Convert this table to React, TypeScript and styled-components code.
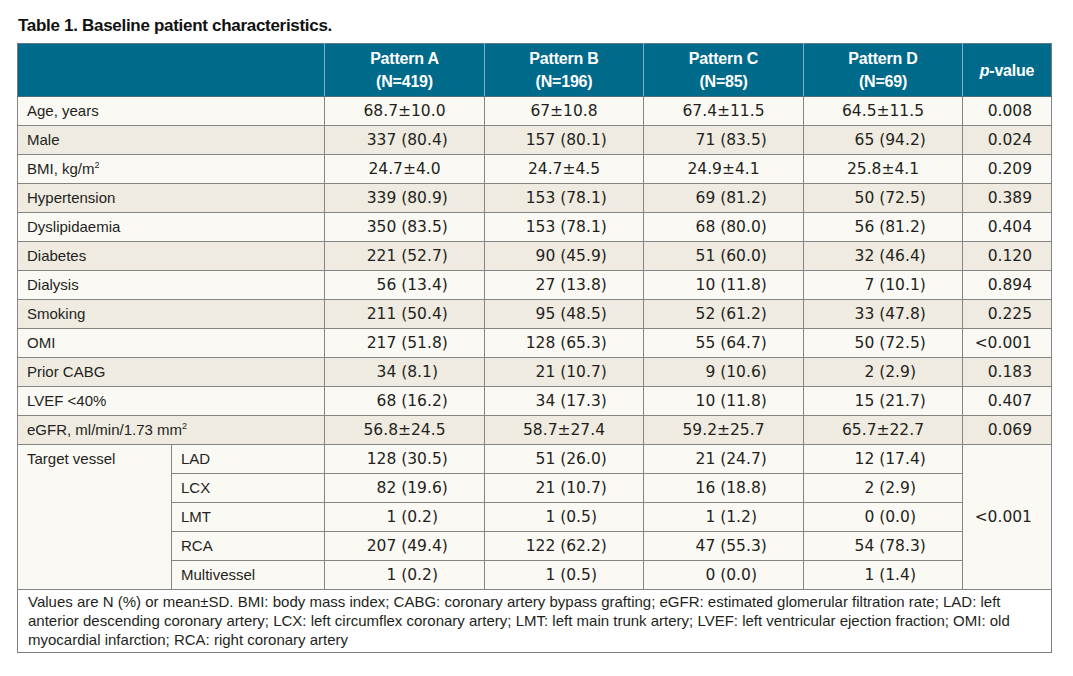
import React from 'react';
import styled, { createGlobalStyle } from 'styled-components';

const GlobalStyle = createGlobalStyle`
  html, body {
    margin: 0;
    padding: 0;
    background: #ffffff;
  }

  body {
    font-family: "Liberation Sans", Arial, sans-serif;
    color: #231f20;
  }
`;

type Row = {
  label: React.ReactNode;
  values: string[];
  p: string;
};

const rows: Row[] = [
  { label: 'Age, years', values: ['68.7±10.0', '67±10.8', '67.4±11.5', '64.5±11.5'], p: '0.008' },
  { label: 'Male', values: ['337 (80.4)', '157 (80.1)', '71 (83.5)', '65 (94.2)'], p: '0.024' },
  { label: <>BMI, kg/m<sup>2</sup></>, values: ['24.7±4.0', '24.7±4.5', '24.9±4.1', '25.8±4.1'], p: '0.209' },
  { label: 'Hypertension', values: ['339 (80.9)', '153 (78.1)', '69 (81.2)', '50 (72.5)'], p: '0.389' },
  { label: 'Dyslipidaemia', values: ['350 (83.5)', '153 (78.1)', '68 (80.0)', '56 (81.2)'], p: '0.404' },
  { label: 'Diabetes', values: ['221 (52.7)', '90 (45.9)', '51 (60.0)', '32 (46.4)'], p: '0.120' },
  { label: 'Dialysis', values: ['56 (13.4)', '27 (13.8)', '10 (11.8)', '7 (10.1)'], p: '0.894' },
  { label: 'Smoking', values: ['211 (50.4)', '95 (48.5)', '52 (61.2)', '33 (47.8)'], p: '0.225' },
  { label: 'OMI', values: ['217 (51.8)', '128 (65.3)', '55 (64.7)', '50 (72.5)'], p: '<0.001' },
  { label: 'Prior CABG', values: ['34 (8.1)', '21 (10.7)', '9 (10.6)', '2 (2.9)'], p: '0.183' },
  { label: 'LVEF <40%', values: ['68 (16.2)', '34 (17.3)', '10 (11.8)', '15 (21.7)'], p: '0.407' },
  {
    label: <>eGFR, ml/min/1.73 mm<sup>2</sup></>,
    values: ['56.8±24.5', '58.7±27.4', '59.2±25.7', '65.7±22.7'],
    p: '0.069'
  }
];

const vessels: [string, string[]][] = [
  ['LAD', ['128 (30.5)', '51 (26.0)', '21 (24.7)', '12 (17.4)']],
  ['LCX', ['82 (19.6)', '21 (10.7)', '16 (18.8)', '2 (2.9)']],
  ['LMT', ['1 (0.2)', '1 (0.5)', '1 (1.2)', '0 (0.0)']],
  ['RCA', ['207 (49.4)', '122 (62.2)', '47 (55.3)', '54 (78.3)']],
  ['Multivessel', ['1 (0.2)', '1 (0.5)', '0 (0.0)', '1 (1.4)']]
];

const groups = [
  ['Pattern A', '(N=419)'],
  ['Pattern B', '(N=196)'],
  ['Pattern C', '(N=85)'],
  ['Pattern D', '(N=69)']
];

// counts line up on the opening bracket, means are centred
function ValueCell({ value }: { value: string }) {
  const idx = value.indexOf(' (');
  if (idx < 0) return <MeanCell>{value}</MeanCell>;
  return (
    <CountCell>
      {value.slice(0, idx)} <Pct>{value.slice(idx + 1)}</Pct>
    </CountCell>
  );
}

export default function App() {
  return (
    <Page>
      <GlobalStyle />
      <Title>Table 1. Baseline patient characteristics.</Title>
      <Table>
        <colgroup>
          <col style={{ width: 154 }} />
          <col style={{ width: 153 }} />
          <col style={{ width: 160 }} />
          <col style={{ width: 159 }} />
          <col style={{ width: 160 }} />
          <col style={{ width: 159 }} />
          <col style={{ width: 89 }} />
        </colgroup>
        <thead>
          <tr>
            <HeadCell colSpan={2} />
            {groups.map(([name, n]) => (
              <HeadCell key={name}>
                {name}
                <br />
                {n}
              </HeadCell>
            ))}
            <HeadCell>
              <em>p</em>-value
            </HeadCell>
          </tr>
        </thead>
        <tbody>
          {rows.map((row, i) => (
            <BodyRow key={i} $shade={i % 2 === 1}>
              <LabelCell colSpan={2}>{row.label}</LabelCell>
              {row.values.map((v, j) => (
                <ValueCell key={j} value={v} />
              ))}
              <PCell>{row.p}</PCell>
            </BodyRow>
          ))}
          {vessels.map(([name, values], i) => (
            <BodyRow key={name} $shade={false}>
              {i === 0 && (
                <LabelCell rowSpan={5} $top>
                  Target vessel
                </LabelCell>
              )}
              <LabelCell>{name}</LabelCell>
              {values.map((v, j) => (
                <ValueCell key={j} value={v} />
              ))}
              {i === 0 && <PCell rowSpan={5}>&lt;0.001</PCell>}
            </BodyRow>
          ))}
          <tr>
            <FootCell colSpan={7}>
              Values are N (%) or mean±SD. BMI: body mass index; CABG: coronary artery bypass grafting; eGFR:
              estimated glomerular filtration rate; LAD: left
              <br />
              anterior descending coronary artery; LCX: left circumflex coronary artery; LMT: left main trunk
              artery; LVEF: left ventricular ejection fraction; OMI: old
              <br />
              myocardial infarction; RCA: right coronary artery
            </FootCell>
          </tr>
        </tbody>
      </Table>
    </Page>
  );
}

const Page = styled.div`
  padding: 15px 0 0 17px;
  width: 1073px;
  height: 676px;
  box-sizing: border-box;
`;

const Title = styled.h1`
  margin: 0 0 7px 1px;
  font-family: "Liberation Sans", Arial, sans-serif;
  font-size: 17px;
  line-height: 21px;
  letter-spacing: -0.3px;
  font-weight: 700;
  color: #111111;
`;

const Table = styled.table`
  width: 1035px;
  table-layout: fixed;
  border-collapse: collapse;
  border: 1px solid #7d7d7d;
`;

const HeadCell = styled.th`
  height: 52px;
  padding: 0;
  background: #006a8a;
  border-left: 1px solid #7fb2c4;
  border-right: 1px solid #7fb2c4;
  border-top: 1px solid #5f7a84;
  border-bottom: 1px solid #4d6f7b;
  color: #ffffff;
  font-family: "Liberation Sans", Arial, sans-serif;
  font-size: 16px;
  line-height: 23px;
  letter-spacing: -0.2px;
  font-weight: 700;
  text-align: center;
  vertical-align: middle;

  &:first-child {
    border-left-color: #7d7d7d;
  }

  &:last-child {
    border-right-color: #7d7d7d;
  }

  em {
    font-style: italic;
  }
`;

const BodyRow = styled.tr<{ $shade: boolean }>`
  background: ${({ $shade }) => ($shade ? '#efebe0' : '#fbf9f4')};
`;

const Cell = styled.td`
  height: 28px;
  padding: 0;
  border: 1px solid #858585;
  font-size: 15px;
  line-height: 18px;
  vertical-align: middle;
  white-space: nowrap;
`;

const LabelCell = styled(Cell)<{ $top?: boolean }>`
  padding-left: 9px;
  font-family: "Liberation Sans", Arial, sans-serif;
  vertical-align: ${({ $top }) => ($top ? 'top' : 'middle')};
  padding-top: ${({ $top }) => ($top ? '5px' : '0')};

  sup {
    font-size: 9px;
    line-height: 0;
    vertical-align: 6px;
  }
`;

const NumberCell = styled(Cell)`
  font-family: "DejaVu Sans", Verdana, sans-serif;
  font-size: 15.5px;
  color: #231f20;
`;

const MeanCell = styled(NumberCell)`
  text-align: center;
`;

const CountCell = styled(NumberCell)`
  text-align: right;
  padding-right: 36px;
`;

const Pct = styled.span`
  display: inline-block;
  min-width: 3.02em;
  text-align: left;
`;

const PCell = styled(NumberCell)`
  text-align: right;
  padding-right: 19px;
`;

const FootCell = styled.td`
  padding: 2px 10px 3px;
  border: 1px solid #7d7d7d;
  background: #ffffff;
  font-family: "Liberation Sans", Arial, sans-serif;
  font-size: 15px;
  line-height: 19px;
  color: #231f20;
  white-space: nowrap;
`;
